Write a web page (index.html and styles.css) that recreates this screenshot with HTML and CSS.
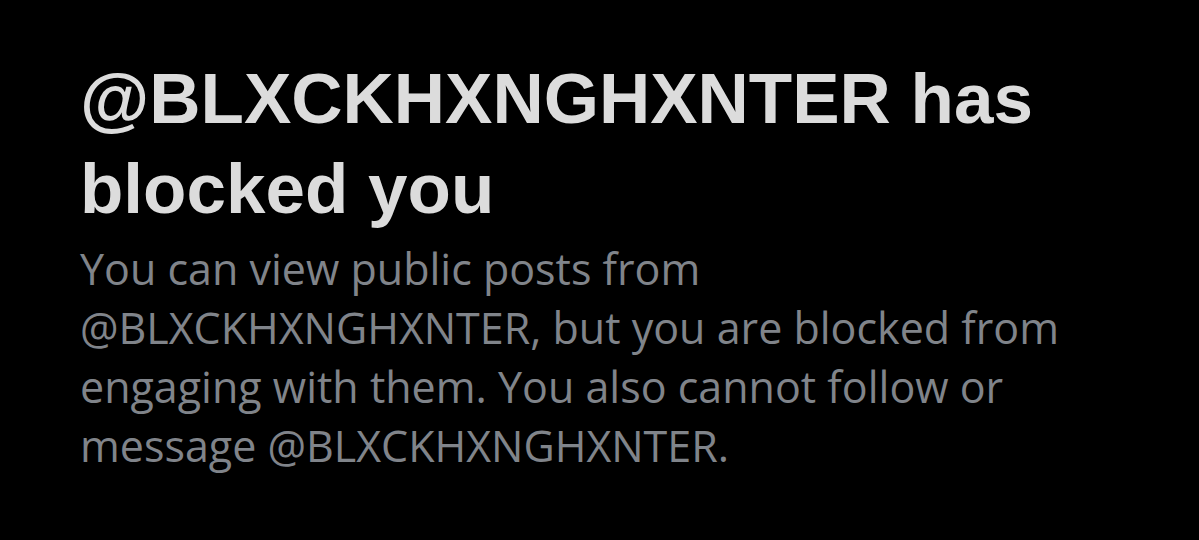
FILE: index.html
```html
<!DOCTYPE html>
<html lang="en">
	<head>
		<meta charset="UTF-8" />
		<meta name="viewport" content="width=device-width, initial-scale=1.0" />
		<title>Blocked</title>
		<link rel="stylesheet" href="styles.css">
	</head>
	<body>
		<div class="blocked-notice">
			<h1 class="blocked-title">@BLXCKHXNGHXNTER has blocked you</h1>
			<p class="blocked-text">
				You can view public posts from @BLXCKHXNGHXNTER, but you are blocked from
				engaging with them. You also cannot follow or message @BLXCKHXNGHXNTER.
			</p>
		</div>
	</body>
</html>
```

FILE: styles.css
```css
body {
	margin: 0;
	background-color: #000;
	height: 540px;
	overflow: hidden;
}

.blocked-notice {
	padding: 54px 0 0 80px;
	width: 1040px;
}

.blocked-title {
	margin: 0;
	font-family: 'Liberation Sans', Arial, sans-serif;
	font-weight: bold;
	font-size: 71px;
	line-height: 90px;
	color: #dcdcdc;
}

.blocked-text {
	margin: 5px 0 0 0;
	font-family: 'Open Sans', 'Noto Sans', sans-serif;
	font-size: 43px;
	line-height: 59px;
	color: #80848a;
}
```
